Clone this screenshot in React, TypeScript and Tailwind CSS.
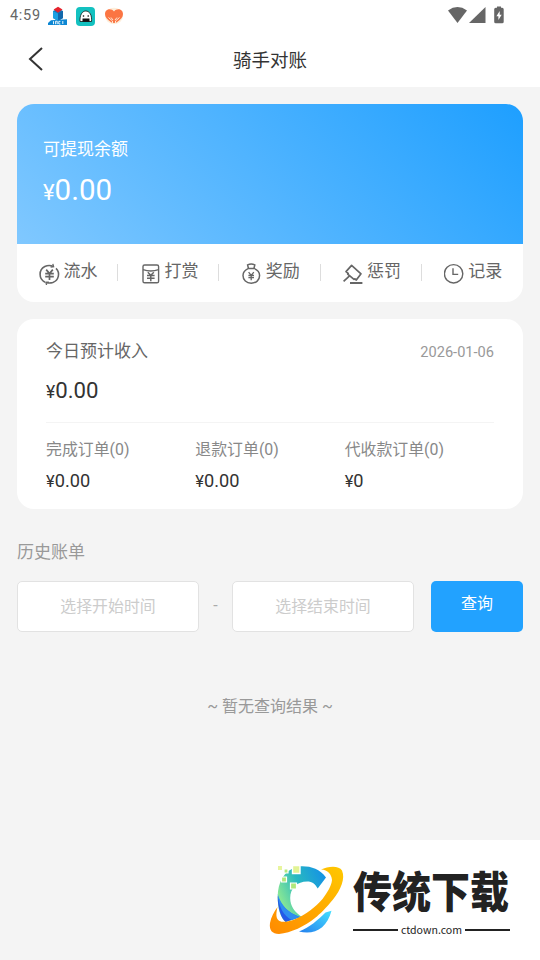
import type { ReactNode } from "react";

const iconClass = "h-[22px] w-[22px] shrink-0";

function FlowIcon() {
  return (
    <svg viewBox="0 0 22 22" className={iconClass} fill="none" stroke="#666" strokeWidth="1.6">
      <path d="M6 19.2C-.6 16 -.4 6.600 5.800 3.500Q10 1.500 14.400 3.400" />
      <path d="M17 5.400c4.600 4.600 2.600 12-3.200 14.100q-3.400 1-6.600 0" />
      <path d="M13.800.8l.8 2.900-3 .3M7.600 22.200l-.7-2.900 3-.2" strokeWidth="1.300" />
      <path d="M7.200 6.600l3.300 4 3.300-4M10.500 10.600v6.400M6.200 10.700h8.600M6.200 13.600h8.600" strokeWidth="1.700" />
    </svg>
  );
}

function RewardIcon() {
  return (
    <svg viewBox="0 0 22 22" className={iconClass} fill="none" stroke="#666" strokeWidth="1.400">
      <rect x="2" y="2" width="15.600" height="17.800" rx="1.600" />
      <path d="M2 6.700q7.800 2.600 15.600 0" />
      <path d="M6.800 9.200l3 3 3-3M9.800 12.200v6M6 12.400h7.600M6 15.200h7.600" strokeWidth="1.500" />
    </svg>
  );
}

function BonusIcon() {
  return (
    <svg viewBox="0 0 22 22" className={iconClass} fill="none" stroke="#666" strokeWidth="1.500">
      <path d="M6.600 5.400C3.400 6.700 1 9.300 1 12.500c0 4.600 3.400 7.700 8.200 7.700s8.400-3.100 8.400-7.700c0-3.200-2.400-5.800-5.600-7.100z" />
      <path d="M6.400 5.200L5.600 1.900q3.600-1.600 7.200 0L12 5.200" />
      <path d="M6.600 9.200l2.600 3.200 2.600-3.200M9.200 12.400v4.800M6.400 12.500h5.600M6.400 14.700h5.600" strokeWidth="1.300" />
    </svg>
  );
}

function PenaltyIcon() {
  return (
    <svg viewBox="0 0 22 22" className={iconClass} fill="none" stroke="#666" strokeWidth="1.700">
      <path d="M8.600 2.400L3 8.600l2.200 1.800-.5.700 6.300 5.300.7-.6 1.600 1.200 4.700-6.200z" strokeLinejoin="round" />
      <path d="M6.800 12.600L.6 18.400" />
      <path d="M7 20h12.400" strokeWidth="1.800" />
    </svg>
  );
}

function RecordIcon() {
  return (
    <svg viewBox="0 0 22 22" className={iconClass} fill="none" stroke="#666" strokeWidth="1.400">
      <circle cx="9.600" cy="10.800" r="9.200" />
      <path d="M9 5.200v6.200h5.200" />
    </svg>
  );
}

function StatusBar() {
  return (
    <div className="flex h-8 items-center justify-between pr-[35px] pl-[10px]">
      <div className="flex items-center">
        <span className="w-[38px] text-[14.500px] leading-8 tracking-[0.700px] text-[#666]">4:59</span>
        <svg width="20" height="20" viewBox="0 0 20 20">
          <path d="M5 5l5-2.500L15 5v7l-5 3-5-3z" fill="#1775b8" />
          <path d="M10 7.500L15 5v7l-5 3z" fill="#1268ac" />
          <path d="M5.600 3.600L10 .8l4.500 2.800L10 6.800z" fill="#e5222c" />
          <path d="M5 5l5 2.400V15l-5-3z" fill="#1da0e2" />
          <path d="M0 17l3-2.700 16-1V19H0z" fill="#0d87d3" />
          <path d="M5.500 15.200v3M7.600 18.200v-3h1.600v3M12.400 15.400h-1.600v2.600h1.600M14.800 15v3" stroke="#fff" strokeWidth=".9" fill="none" />
        </svg>
        <svg width="19" height="19" viewBox="0 0 19 19" className="ml-2">
          <rect width="19" height="19" rx="4" fill="#13c1c0" />
          <path d="M4 14.500C3.600 8 6.200 4 9.800 4s6.400 4 5.700 10.500z" fill="#fff" stroke="#111" strokeWidth=".8" />
          <path d="M6.500 11.500h7v3.300h-7z" fill="#111" />
          <circle cx="7.500" cy="9" r=".8" />
          <circle cx="12.200" cy="9" r=".8" />
        </svg>
        <svg width="20" height="18" viewBox="0 0 20 18" className="ml-[9px]">
          <ellipse cx="10" cy="9" rx="9" ry="8.200" fill="#fdeedb" />
          <path d="M10 4.400C7.600.8 1 1.400 1 7c0 3 2 5.500 6.500 8.500L10 16l2.500-.5C17 12.500 19 10 19 7c0-5.600-6.600-6.200-9-2.600z" fill="#fb7543" />
          <path d="M4.500 10.500l4 3.500v2M15.500 10.500l-4 3.500v2M7 10.500l2 2.500M13 10.500L11 13" stroke="#fff0e0" strokeWidth=".9" fill="none" />
        </svg>
      </div>
      <svg width="57" height="18" viewBox="0 0 57 18" fill="#666" className="-mt-[2px]">
        <path d="M0 4.500Q9.500-2.300 19 4.500L9.500 17z" />
        <path d="M37.500 1v16H21z" />
        <path d="M49 1.800V.6h4v1.200h1.200a1.500 1.500 0 0 1 1.500 1.500v12.400a1.500 1.500 0 0 1-1.500 1.500h-6.500a1.500 1.500 0 0 1-1.500-1.500V3.300a1.500 1.500 0 0 1 1.500-1.500z" />
        <path d="M51.700 5l-3.300 5.300h2v3.700l3.300-5.200h-2z" fill="#fff" />
      </svg>
    </div>
  );
}

const tabs: { label: string; icon: ReactNode }[] = [
  { label: "流水", icon: <FlowIcon /> },
  { label: "打赏", icon: <RewardIcon /> },
  { label: "奖励", icon: <BonusIcon /> },
  { label: "惩罚", icon: <PenaltyIcon /> },
  { label: "记录", icon: <RecordIcon /> },
];

const orders = [
  { label: "完成订单(0)", value: "0.00" },
  { label: "退款订单(0)", value: "0.00" },
  { label: "代收款订单(0)", value: "0" },
];

function DateField({ placeholder }: { placeholder: string }) {
  return (
    <div className="h-[51px] w-[182px] rounded-[5px] border border-[#e2e2e2] bg-white text-center text-[15.900px] leading-[50px] text-[#ccc]">
      {placeholder}
    </div>
  );
}

function Watermark() {
  return (
    <div className="absolute right-0 bottom-0 flex h-[120px] w-[280px] bg-white">
      <svg width="90" height="120" viewBox="0 0 90 120" className="shrink-0">
        <defs>
          <linearGradient id="orbit" x1="0" y1="1" x2="1" y2="0">
            <stop offset="0" stopColor="#ff8a00" />
            <stop offset="1" stopColor="#ffc800" />
          </linearGradient>
          <linearGradient id="ring" x1="0" y1="0.700" x2="1" y2="0.200">
            <stop offset="0" stopColor="#9bf08c" />
            <stop offset="0.500" stopColor="#28b9c0" />
            <stop offset="1" stopColor="#1592e5" />
          </linearGradient>
          <linearGradient id="wave" x1="0" y1="1" x2="1" y2="0">
            <stop offset="0" stopColor="#247fee" />
            <stop offset="1" stopColor="#45e0ff" />
          </linearGradient>
        </defs>
        <path d="M66 37.500C59 28 49 25.500 38 26.500 24 30 17.700 42 17.700 57c0 12 3 21 8 25l16-5c-7-5-11.500-11-11.500-19 0-10 7-16.500 17-16.500 5 0 8 2.500 10.500 7z" fill="url(#ring)" />
        <path d="M17.700 56c0 12 3 22 8 26l14-5C29 73 21 66 17.700 56z" fill="#2459e8" />
        <path d="M17.700 54c1 13 6 22 14 26l8-3C28 73 21 65 17.700 54z" fill="#2e8df0" />
        <path d="M39 91.500c15 4 28-3 32.500-20.800l-6 1.800C58 80 50 87 39 91.500z" fill="url(#wave)" />
        <path
          d="M61 29.500c7-3.500 18-4.500 21 1 3.500 8-1 19-9 29C66 68 60 74 55 78c-10 8-24 15-36 16-7 0-10-4-9-11 1-6 4-11 7.500-16-1.500 6-2 12 2 14 4 1.800 10 .5 16-2 10-4 20-12 27-20 5-7 9-13 9.500-19-.5-6-4-10-11-10.500z"
          fill="url(#orbit)"
        />
        <path d="M18 26h4v4h-4z" fill="#e8f59d" />
        <path d="M32.500 25.500h7.500v8h-7.500z" fill="#e2f394" stroke="#fff" strokeWidth="1.400" />
        <path d="M24 29h4v4h-4zM21.500 37h5v5h-5zM30.500 43h6v6h-6z" fill="#b1e87c" stroke="#fff" strokeWidth="1.200" />
      </svg>
      <div className="flex w-[160px] flex-col pt-[28px]">
        <div className="ml-[3px] h-[51px] w-[157px] origin-left scale-y-[1.120] text-[39px] leading-[50px] font-black whitespace-nowrap text-[#222]">
          传统下载
        </div>
        <div className="flex h-[22px] items-center gap-[3px] pl-[3px]">
          <span className="h-[2px] flex-1 bg-[#222]" />
          <span className="font-['Noto_Sans_CJK_SC'] text-[10.600px] leading-[22px] text-[#222]">ctdown.com</span>
          <span className="h-[2px] flex-1 bg-[#222]" />
        </div>
      </div>
    </div>
  );
}

export default function App() {
  return (
    <div className="relative h-[960px] w-[540px] overflow-hidden bg-[#f4f4f4] font-[Roboto,'Noto_Sans_CJK_SC',sans-serif]">
      <div className="h-[87px] bg-white">
        <StatusBar />
        <div className="grid h-[55px] grid-cols-[60px_1fr_60px]">
          <svg width="18" height="26" viewBox="0 0 18 26" className="mt-[14px] ml-[27px]" fill="none" stroke="#333" strokeWidth="2">
            <path d="M15 2L3 13l12 11" />
          </svg>
          <h1 className="pt-px text-center text-[18.500px] leading-[56px] text-[#333]">骑手对账</h1>
        </div>
      </div>

      <div className="px-[17px] pt-[17.400px]">
        <section className="h-[198px] overflow-hidden rounded-[17px] bg-white">
          <div className="h-[139.600px] bg-[linear-gradient(45deg,#80c8ff,#1e9fff)] pt-[32px] pl-[26px] text-white">
            <p className="text-[17px] leading-[26px]">可提现余额</p>
            <p className="mt-[8px] text-[29.500px] leading-[40px]">
              <span className="text-[22px]">¥</span>0.00
            </p>
          </div>
          <div className="grid h-[58px] grid-cols-5">
            {tabs.map((tab, index) => (
              <div key={tab.label} className="flex items-center">
                <div className="flex flex-1 gap-[2px] pl-[22.400px]">
                  <div className="pt-[2px]">{tab.icon}</div>
                  <span className="text-[17px] leading-[20px] text-[#666]">{tab.label}</span>
                </div>
                {index < tabs.length - 1 && <span className="h-[17px] w-px bg-[#ddd]" />}
              </div>
            ))}
          </div>
        </section>

        <section className="mt-[17px] h-[189.800px] rounded-[17px] bg-white px-[29px] pt-[19px]">
          <div className="flex h-[26px] items-center justify-between">
            <h2 className="text-[17px] text-[#666]">今日预计收入</h2>
            <span className="pt-[3px] text-[14.600px] text-[#999]">2026-01-06</span>
          </div>
          <p className="mt-[10px] h-[49px] border-b border-[#f4f4f4] text-[22.200px] leading-[32px] text-[#333]">
            <span className="text-[17.500px]">¥</span>0.00
          </p>
          <div className="grid grid-cols-3 pt-[14px]">
            {orders.map((order) => (
              <div key={order.label}>
                <p className="text-[15.900px] leading-[26px] text-[#888]">{order.label}</p>
                <p className="mt-[5px] text-[18.200px] leading-[26px] text-[#333]">
                  <span className="text-[16.500px]">¥</span>
                  {order.value}
                </p>
              </div>
            ))}
          </div>
        </section>

        <h2 className="mt-[30px] text-[17px] leading-[26px] text-[#999]">历史账单</h2>
        <div className="mt-[16px] flex">
          <DateField placeholder="选择开始时间" />
          <span className="w-[33px] text-center text-[16px] leading-[50px] text-[#aaa]">-</span>
          <DateField placeholder="选择结束时间" />
          <button className="ml-[17px] h-[51px] w-[92px] rounded-[5px] bg-[#22a2ff] pb-[6px] text-[16px] text-white">
            查询
          </button>
        </div>
        <p className="mt-[61.500px] text-center text-[16px] leading-[26px] text-[#999]">~ 暂无查询结果 ~</p>
      </div>

      <Watermark />
    </div>
  );
}
